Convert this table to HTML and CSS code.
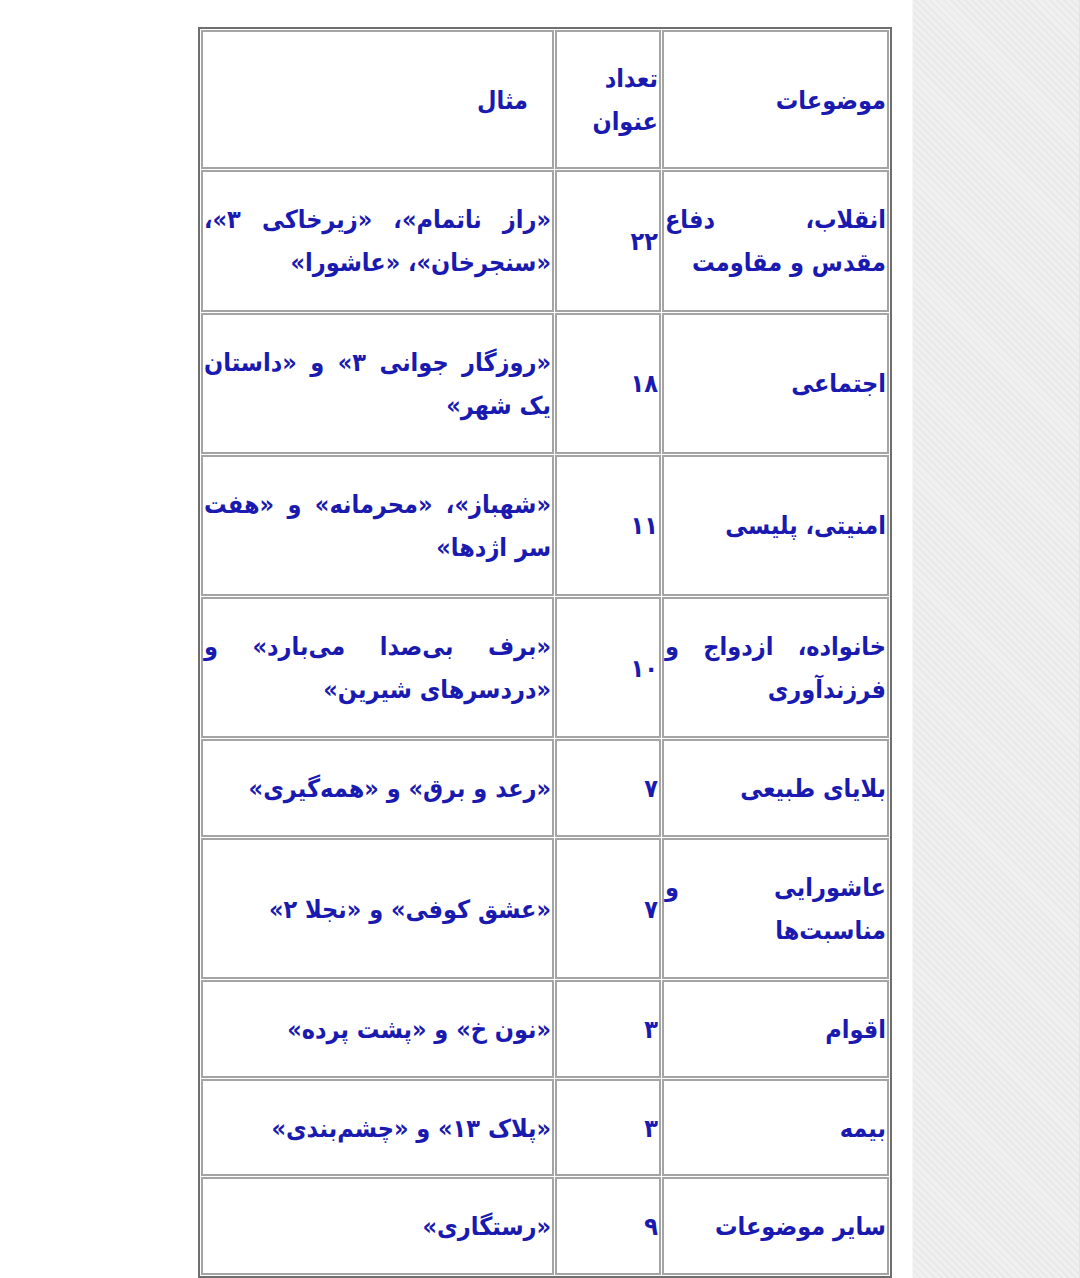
FILE: index.html
```html
<!DOCTYPE html>
<html lang="fa" dir="rtl">
<head>
<meta charset="utf-8">
<title>جدول موضوعات</title>
<link rel="stylesheet" href="styles.css">
</head>
<body>
<div class="page">
  <main class="content">
    <table class="topics">
      <tbody>
        <tr class="head-row">
          <td class="c-topic">موضوعات</td>
          <td class="c-num">تعداد عنوان</td>
          <td class="c-ex head-ex">مثال</td>
        </tr>
        <tr>
          <td class="c-topic">انقلاب، دفاع مقدس&nbsp;و مقاومت</td>
          <td class="c-num">۲۲</td>
          <td class="c-ex">«راز ناتمام»، «زیرخاکی ۳»، «سنجرخان»، «عاشورا»</td>
        </tr>
        <tr>
          <td class="c-topic">اجتماعی</td>
          <td class="c-num">۱۸</td>
          <td class="c-ex">«روزگار جوانی ۳» و «داستان یک شهر»</td>
        </tr>
        <tr>
          <td class="c-topic">امنیتی، پلیسی</td>
          <td class="c-num">۱۱</td>
          <td class="c-ex">«شهباز»، «محرمانه» و «هفت سر اژدها»</td>
        </tr>
        <tr>
          <td class="c-topic">خانواده، ازدواج و فرزندآوری</td>
          <td class="c-num">۱۰</td>
          <td class="c-ex">«برف بی‌صدا می‌بارد» و «دردسرهای شیرین»</td>
        </tr>
        <tr>
          <td class="c-topic">بلایای طبیعی</td>
          <td class="c-num">۷</td>
          <td class="c-ex">«رعد و برق» و «همه‌گیری»</td>
        </tr>
        <tr>
          <td class="c-topic">عاشورایی و مناسبت‌ها</td>
          <td class="c-num">۷</td>
          <td class="c-ex">«عشق کوفی» و «نجلا ۲»</td>
        </tr>
        <tr>
          <td class="c-topic">اقوام</td>
          <td class="c-num">۳</td>
          <td class="c-ex">«نون خ» و «پشت پرده»</td>
        </tr>
        <tr>
          <td class="c-topic">بیمه</td>
          <td class="c-num">۳</td>
          <td class="c-ex">«پلاک ۱۳» و «چشم‌بندی»</td>
        </tr>
        <tr>
          <td class="c-topic">سایر موضوعات</td>
          <td class="c-num">۹</td>
          <td class="c-ex">«رستگاری»</td>
        </tr>
      </tbody>
    </table>
  </main>
  <aside class="side"></aside>
</div>
</body>
</html>
```
FILE: styles.css
```css
html, body {
  margin: 0;
  padding: 0;
  background: #ffffff;
}

.page {
  display: flex;
  flex-direction: row-reverse;
  width: 1080px;
  height: 1278px;
  overflow: hidden;
}

.content {
  width: 912px;
  box-sizing: border-box;
  padding: 27px 20px 0 0;
  display: flex;
  justify-content: flex-start;
}

.side {
  flex: 1;
  border-right: 1px solid #e4e4e4;
  box-shadow: inset 1px 0 0 #f6f6f6;
  background-color: #ececec;
  background-image: repeating-linear-gradient(45deg, #e9e9e9 0, #e9e9e9 2px, #f0f0f0 2px, #f0f0f0 5px);
}

.topics {
  width: 694px;
  table-layout: fixed;
  border-collapse: separate;
  border-spacing: 1px;
  border: 2px solid #6f6f6f;
  font-family: "DejaVu Sans Condensed", "DejaVu Sans", sans-serif;
  font-weight: bold;
  font-size: 25px;
  line-height: 43px;
  color: #1a1ab0;
}

.topics td {
  box-sizing: border-box;
  border: 2px solid #a4a4a4;
  padding: 25px 1px 24px;
  vertical-align: middle;
  text-align: justify;
  text-align-last: right;
}

.topics .head-row td {
  padding-top: 24px;
  padding-bottom: 23px;
}

.c-topic { width: 227px; }
.c-num { width: 106px; }
.c-ex { width: 353px; }

.topics .head-ex { padding-right: 24px; }
```
